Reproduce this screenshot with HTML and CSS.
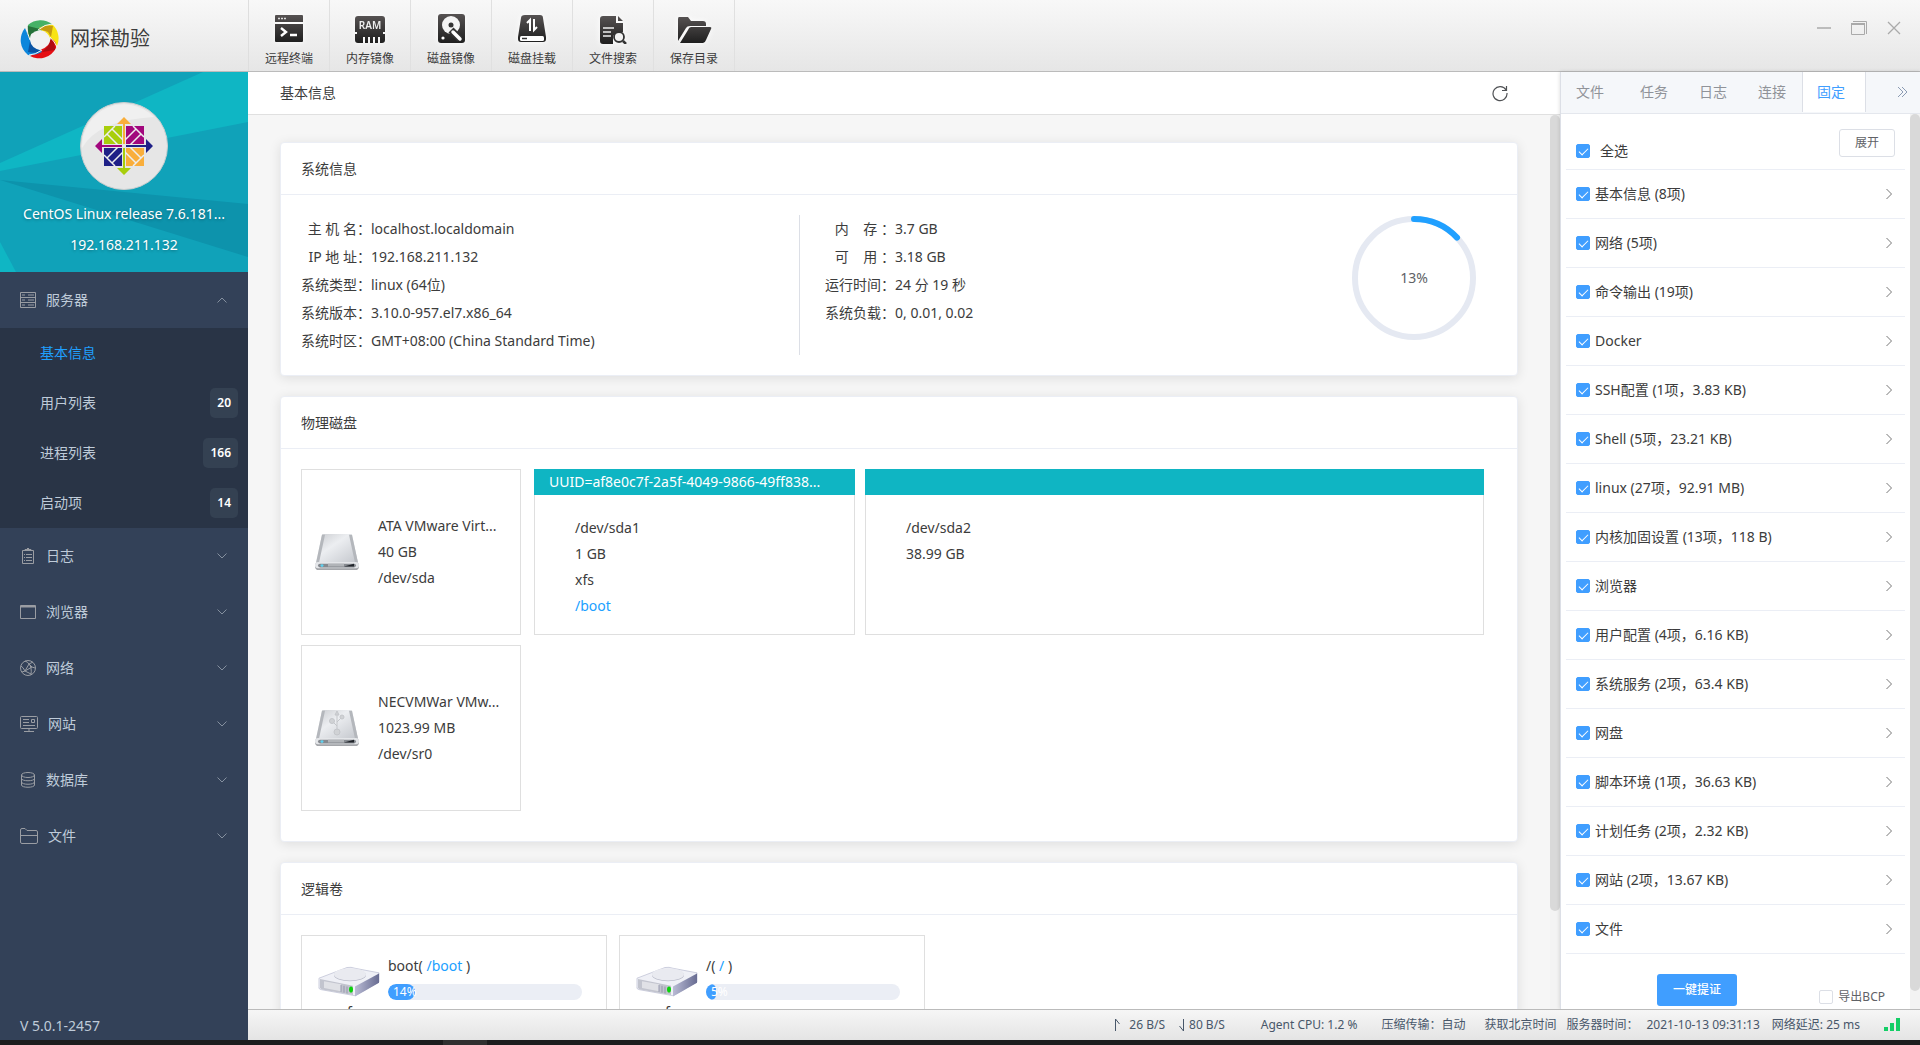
FILE: index.html
```html
<!DOCTYPE html>
<html lang="zh-CN">
<head>
<meta charset="utf-8">
<title>网探勘验</title>
<link rel="stylesheet" href="styles.css">
</head>
<body>
<svg class="defs" aria-hidden="true">
  <defs>
    <linearGradient id="ink" x1="0" y1="0" x2="0" y2="1"><stop offset="0" stop-color="#565252"/><stop offset="1" stop-color="#1f1f1f"/></linearGradient>
    <linearGradient id="metal" x1="0" y1="0" x2="1" y2="1"><stop offset="0" stop-color="#c9cbcf"/><stop offset=".4" stop-color="#eceef1"/><stop offset="1" stop-color="#c3c6cc"/></linearGradient>
    <linearGradient id="side" x1="0" y1="0" x2="1" y2="0"><stop offset="0" stop-color="#b9bbd4"/><stop offset="1" stop-color="#686c92"/></linearGradient>
    <symbol id="down" viewBox="0 0 12 12"><path d="M1.500 3.500 6 8l4.500-4.500" fill="none" stroke="currentColor"/></symbol>
    <symbol id="right" viewBox="0 0 12 12"><path d="M3.500 1 8.500 6l-5 5" fill="none" stroke="currentColor"/></symbol>
    <symbol id="disk" viewBox="0 0 46 42" preserveAspectRatio="none">
      <path d="M8 2Q8 1 10 1H36Q38 1 38 2L44 33H2Z" fill="url(#metal)"/>
      <path d="M8 2 2 33H5L11 2ZM38 2 44 33H41L35 2Z" fill="#b4b7bc"/>
      <rect x="1" y="32" width="44" height="9" rx="4" fill="#a4a6aa"/>
      <rect x="1" y="32" width="44" height="7" rx="3" fill="#e4e6e9"/>
      <rect x="4" y="34" width="38" height="4" rx="2" fill="#85898f"/>
      <path d="M30 37h10v-3Z" fill="#20242a"/><rect x="14" y="34" width="16" height="3" fill="#b1b4b8"/>
      <circle cx="8" cy="36" r="1.500" fill="#5fd0ee"/>
    </symbol>
    <symbol id="volume" viewBox="0 0 64 42" preserveAspectRatio="none">
      <path d="M2 16 30 2Q34 1 38 3L62 9V21L38 39 4 31Q1 30 2 27Z" fill="#eff0f6" stroke="#c6c8da"/>
      <path d="M38 27 62 10V22L38 40Z" fill="url(#side)"/>
      <path d="M3 17 36 26V38L5 31Q3 30 3 28Z" fill="#c2c4ce"/>
      <path d="M7 20 24 24V33L7 29Z" fill="#e0e1e6"/><path d="M24 25v9m3-8v9m3-8v9" stroke="#8e91a8"/>
      <ellipse cx="33" cy="12" rx="16" ry="8" fill="#b9bbc9"/><ellipse cx="33" cy="11" rx="16" ry="8" fill="#e9eaf0"/>
      <ellipse cx="34" cy="31" rx="2" ry="4" fill="#0bd20b"/>
    </symbol>
  </defs>
</svg>
<div class="app">
  <header class="topbar">
    <div class="brand">
      <svg width="40" height="40" viewBox="0 0 40 40">
        <path d="M8 6A19 19 0 0 1 32 5L25 10 11 20Q7 14 8 6Z" fill="#46b166"/><path d="M8 7Q6 13 9 20L12 15 20 10Z" fill="#26723a"/>
        <path d="M33 6A19 19 0 0 1 37 27L31 20 19 9Q27 5 33 6Z" fill="#f8e313"/><path d="M33 7Q25 5 19 10L28 13 31 18Z" fill="#c59a10"/>
        <path d="M36 29A19 19 0 0 1 10 37L18 33 32 20Q37 23 36 29Z" fill="#e60f14"/><path d="M35 31Q35 24 31 19L28 27 22 33Z" fill="#b00c12"/>
        <path d="M8 36A19 19 0 0 1 5 9L9 19 22 33Q15 37 8 36Z" fill="#0c86dc"/><path d="M8 33Q15 35 21 32L14 28 10 22Z" fill="#0a55a5"/>
        <path d="M20 11Q29 13 30 20T20 31Q11 29 10 21T20 11Z" fill="#f1f1f1"/>
        <path d="M7 8Q7 14 10 21M32 5Q25 5 18 11M37 28Q35 23 30 18M9 36Q15 36 22 31" fill="none" stroke="#f4f4f4"/>
      </svg>
      <h1>网探勘验</h1>
    </div>
    <nav class="tools">
      <button class="tool"><svg width="30" height="30" viewBox="0 0 30 30"><path fill="url(#ink)" d="M2 1h26a1 1 0 0 1 1 1v6H1V2a1 1 0 0 1 1-1ZM1 10h28v17a1 1 0 0 1-1 1H2a1 1 0 0 1-1-1Z"/><path d="M4 4.500h2m1 0h2m1 0h2" stroke="#ddd" stroke-width="1.500"/><path d="m7 14 5 4-5 4M16 21h7" fill="none" stroke="#fff" stroke-width="2.400"/></svg>远程终端</button>
      <button class="tool"><svg width="30" height="30" viewBox="0 0 30 30"><path fill="url(#ink)" d="M3 2h24a3 3 0 0 1 3 3v13h-2v2h2v6a3 3 0 0 1-3 3h-2v-6h-2v6h-3v-6h-2v6h-3v-6h-2v6h-3v-6H8v6H3a3 3 0 0 1-3-3v-6h2v-2H0V5a3 3 0 0 1 3-3Z"/><text x="15" y="15" text-anchor="middle" class="ram">RAM</text></svg>内存镜像</button>
      <button class="tool"><svg width="30" height="30" viewBox="0 0 30 30"><rect x="2" y="0" width="27" height="29" rx="3" fill="url(#ink)"/><circle cx="15" cy="11" r="9" fill="#f4f4f4"/><circle cx="15" cy="11" r="2.500" fill="#333"/><path d="m15 16 9 9" stroke="#333" stroke-width="7"/><path d="m17 18 7 7" stroke="#fff" stroke-width="3.500" stroke-linecap="round"/><circle cx="7" cy="24" r="1.600" fill="#fff"/></svg>磁盘镜像</button>
      <button class="tool"><svg width="30" height="30" viewBox="0 0 30 30"><path fill="url(#ink)" d="M8 1h15q3 0 3 3l3 19v2q0 3-3 3H4q-3 0-3-3v-2L4 4q0-3 4-3Z"/><rect x="3" y="22" width="24" height="5" rx="1.500" fill="#fff"/><path d="M5 24.500h5" stroke="#333" stroke-width="1.500"/><path d="m10 9 3-3v11m4-12v11l3-3" fill="none" stroke="#fff" stroke-width="2"/></svg>磁盘挂载</button>
      <button class="tool"><svg width="30" height="30" viewBox="0 0 30 30"><path fill="url(#ink)" d="M5 2h13v7h7v9h-6l-4 4v8H5q-3 0-3-3V5q0-3 3-3Zm15 0 5 5h-5Z"/><path d="M5 14h11M5 18h8M5 22h8" stroke="#eee" stroke-width="1.500"/><circle cx="21" cy="23" r="5" fill="#f3f3f3" stroke="#333" stroke-width="1.800"/><path d="m25 27 3 3" stroke="#333" stroke-width="2.500"/></svg>文件搜索</button>
      <button class="tool"><svg width="36" height="30" viewBox="0 0 36 30"><path fill="url(#ink)" d="M3 3h9l3 4h12q3 0 3 3v2H14q-3 0-4 2L2 27V5q0-2 1-2ZM15 13h19q2 0 1 2l-5 11q-1 3-3 3H4l8-13q1-3 3-3Z"/></svg>保存目录</button>
    </nav>
    <div class="window-controls">
      <button aria-label="最小化"><svg width="16" height="16" viewBox="0 0 16 16"><path d="M1 8h14" stroke="#aaa" stroke-width="1.500"/></svg></button>
      <button aria-label="还原"><svg width="18" height="16" viewBox="0 0 18 16"><path d="M1.500 4.500h13v10h-13ZM3 1.500h13.500V14" fill="none" stroke="#aaa"/><path d="M1 4h14" stroke="#aaa" stroke-width="2"/></svg></button>
      <button aria-label="关闭"><svg width="16" height="16" viewBox="0 0 16 16"><path d="m2 2 12 12M14 2 2 14" stroke="#aaa" stroke-width="1.300"/></svg></button>
    </div>
  </header>

  <div class="workspace">
    <aside class="sidebar">
      <section class="host">
        <svg class="host-bg" viewBox="0 0 248 200" preserveAspectRatio="none"><path fill="#10a2b9" d="M0 0h248v200H0z"/><path fill="#0fb6c4" d="M203 0h45v50L0 99V91Z"/><path fill="#0d93ac" d="m0 108 248 24v53Z"/><path fill="#0fb6c4" d="m0 170 16 30H0Z"/></svg>
        <svg class="distro" width="88" height="88" viewBox="-44 -44 88 88">
          <circle r="43.500" fill="#e6e6e6" stroke="#c9cdce"/><path d="M-42 2A42 42 0 0 1 30-29Q-26-26-42 2Z" fill="#f0f0f0"/>
          <path fill="#a8ce0c" d="M-20-20h18v18h-18z"/><path fill="#a2077d" d="M2-20h18v18H2z"/><path fill="#1f2087" d="M-20 2h18v18h-18z"/><path fill="#f9ae3b" d="M2 2h18v18H2z"/>
          <path fill="none" stroke="#eee" stroke-width="1.500" d="M-17-12-5 0M-12-17 0-5M12-17 0-5M17-12 5 0M-17 12-5 0M-12 17 0 5M12 17 0 5M17 12 5 0M-20-9-9-20M9-20 20-9M-20 9-9 20M9 20 20 9"/>
          <path fill="#f9ae3b" d="m0-29 7 7H1V-2h-2v-20h-6Z"/><path fill="#1f2087" d="m29 0-7 7V1H2v-2h20v-6Z"/><path fill="#a8ce0c" d="m0 29 7-7H1V2h-2v20h-6Z"/><path fill="#a2077d" d="m-29 0 7 7V1h20v-2h-20v-6Z"/>
        </svg>
        <p class="os">CentOS Linux release 7.6.181...</p>
        <p class="ip">192.168.211.132</p>
      </section>
      <nav class="menu">
        <button class="menu-item open"><svg class="ico" width="16" height="16" viewBox="0 0 16 16"><path d="M.5.500h15v15H.5ZM.5 5.500h15M.5 10.500h15M2 3h3m3 0h6M2 8h3m3 0h6M2 13h3m3 0h6"/></svg><span>服务器</span><svg class="chev" width="12" height="12"><use href="#down"/></svg></button>
        <div class="submenu">
          <a href="#" class="current"><span>基本信息</span></a>
          <a href="#"><span>用户列表</span><b>20</b></a>
          <a href="#"><span>进程列表</span><b>166</b></a>
          <a href="#"><span>启动项</span><b>14</b></a>
        </div>
        <button class="menu-item"><svg class="ico" width="16" height="16" viewBox="0 0 16 16"><path d="M2.500 2.500h11v13h-11ZM5 3V1.500h6V3M7 .5h2M4 6.500h1m1 0h6M4 9.500h1m1 0h6M4 12.500h1m1 0h6"/></svg><span>日志</span><svg class="chev" width="12" height="12"><use href="#down"/></svg></button>
        <button class="menu-item"><svg class="ico" width="16" height="16" viewBox="0 0 16 16"><path d="M.5 1.500h15v13H.5Z"/><path d="M1 2.500h14" stroke-width="2"/></svg><span>浏览器</span><svg class="chev" width="12" height="12"><use href="#down"/></svg></button>
        <button class="menu-item"><svg class="ico" width="16" height="16" viewBox="0 0 16 16"><circle cx="8" cy="8" r="7.500"/><path d="M5 1q3 1 4 3 3 3 2 11M1 6q2 1 4 5l7-4 3 1M9 4 5 11l-3 1m9 2-6-3m4-7 4-2m-1 5-3-3"/></svg><span>网络</span><svg class="chev" width="12" height="12"><use href="#down"/></svg></button>
        <button class="menu-item"><svg class="ico" width="18" height="16" viewBox="0 0 18 16"><rect x=".5" y=".5" width="17" height="12" rx="1"/><path d="M3 3.500h6M3 6.500h6M3 9.500h12M11.500 3.500h3v3h-3ZM9 13v2M4 15.500h10"/></svg><span>网站</span><svg class="chev" width="12" height="12"><use href="#down"/></svg></button>
        <button class="menu-item"><svg class="ico" width="16" height="16" viewBox="0 0 16 16"><ellipse cx="8" cy="3" rx="6.500" ry="2.500"/><path d="M1.500 3v10c0 3 13 3 13 0V3M1.500 6.500c0 3 13 3 13 0M1.500 10c0 3 13 3 13 0"/></svg><span>数据库</span><svg class="chev" width="12" height="12"><use href="#down"/></svg></button>
        <button class="menu-item"><svg class="ico" width="18" height="16" viewBox="0 0 18 16"><path d="M.5 14V2Q.5.500 2 .5h3l2 2h9q1.500 0 1.500 1.500v10q0 1.500-1.500 1.500H2Q.5 15.500.5 14ZM.5 7.500h17"/></svg><span>文件</span><svg class="chev" width="12" height="12"><use href="#down"/></svg></button>
      </nav>
      <p class="version">V 5.0.1-2457</p>
    </aside>

    <div class="stage">
      <div class="panes">
        <main class="content">
          <div class="page-head"><h2>基本信息</h2><button aria-label="刷新"><svg width="18" height="18" viewBox="0 0 18 18"><path d="M15 6A7 7 0 1 0 16 9M15.500 2v4.500H11" fill="none" stroke="#505255" stroke-width="1.200"/></svg></button></div>
          <div class="scroller">
            <div class="cards">
              <section class="card">
                <h3>系统信息</h3>
                <div class="card-body sys">
                  <dl class="info first">
                    <dt>主 机 名：</dt><dd>localhost.localdomain</dd>
                    <dt>IP 地 址：</dt><dd>192.168.211.132</dd>
                    <dt>系统类型：</dt><dd>linux (64位)</dd>
                    <dt>系统版本：</dt><dd>3.10.0-957.el7.x86_64</dd>
                    <dt>系统时区：</dt><dd>GMT+08:00 (China Standard Time)</dd>
                  </dl>
                  <dl class="info">
                    <dt>内 &nbsp; &nbsp;存 ：</dt><dd>3.7 GB</dd>
                    <dt>可 &nbsp; &nbsp;用 ：</dt><dd>3.18 GB</dd>
                    <dt>运行时间：</dt><dd>24 分 19 秒</dd>
                    <dt>系统负载：</dt><dd>0, 0.01, 0.02</dd>
                  </dl>
                  <div class="gauge">
                    <svg width="126" height="126" viewBox="0 0 126 126"><circle cx="63" cy="63" r="59" fill="none" stroke="#e5e9f2" stroke-width="6"/><circle cx="63" cy="63" r="59" fill="none" stroke="#20a0ff" stroke-width="6" stroke-linecap="round" pathLength="100" stroke-dasharray="13 100" transform="rotate(-90 63 63)"/></svg>
                    <span>13%</span>
                  </div>
                </div>
              </section>

              <section class="card">
                <h3>物理磁盘</h3>
                <div class="card-body disks">
                  <div class="disk-row">
                    <div class="disk"><svg width="46" height="38"><use href="#disk"/></svg><div><p>ATA VMware Virt...</p><p>40 GB</p><p>/dev/sda</p></div></div>
                    <div class="part boot-part"><h4>UUID=af8e0c7f-2a5f-4049-9866-49ff838...</h4><div><p>/dev/sda1</p><p>1 GB</p><p>xfs</p><p><a href="#">/boot</a></p></div></div>
                    <div class="part root-part"><h4></h4><div><p>/dev/sda2</p><p>38.99 GB</p></div></div>
                  </div>
                  <div class="disk-row">
                    <div class="disk"><svg width="46" height="38"><use href="#disk"/><g fill="none" stroke="#c4c6ca"><path d="M23 26V6M23 17l-4-4m4 0 4-4"/><circle cx="23" cy="23" r="3" fill="#d0d2d5"/><circle cx="18" cy="12" r="2.500" fill="#d0d2d5"/><circle cx="28" cy="8" r="2" fill="#d0d2d5"/><path d="m21 6 2-4 2 4Z" fill="#d0d2d5"/></g></svg><div><p>NECVMWar VMw...</p><p>1023.99 MB</p><p>/dev/sr0</p></div></div>
                  </div>
                </div>
              </section>

              <section class="card">
                <h3>逻辑卷</h3>
                <div class="card-body volumes">
                  <div class="volume"><div class="vol-icon"><svg width="64" height="32"><use href="#volume"/></svg><span>xfs</span></div><div class="vol-info"><p>boot( <a href="#">/boot</a> )</p><div class="bar"><i style="width:14%"></i><span>14%</span></div></div></div>
                  <div class="volume"><div class="vol-icon"><svg width="64" height="32"><use href="#volume"/></svg><span>xfs</span></div><div class="vol-info"><p>/( <a href="#">/</a> )</p><div class="bar"><i style="width:5%"></i><span>5%</span></div></div></div>
                </div>
              </section>
            </div>
            <div class="track"><div class="thumb main-thumb"></div></div>
          </div>
        </main>

        <aside class="evidence">
          <div class="tabs">
            <button class="wide">文件</button><button>任务</button><button>日志</button><button>连接</button><button class="active wide">固定</button>
            <button class="more" aria-label="更多"><svg width="12" height="12" viewBox="0 0 12 12"><path d="m1 1 5 5-5 5M5 1l5 5-5 5" fill="none" stroke="#8b9bb3"/></svg></button>
          </div>
          <div class="evidence-body">
            <div class="evidence-main">
              <div class="all-row"><label><input type="checkbox" checked>全选</label><button class="plain">展开</button></div>
              <ul class="items">
                <li><label><input type="checkbox" checked>基本信息 (8项)</label><svg width="12" height="12"><use href="#right"/></svg></li>
                <li><label><input type="checkbox" checked>网络 (5项)</label><svg width="12" height="12"><use href="#right"/></svg></li>
                <li><label><input type="checkbox" checked>命令输出 (19项)</label><svg width="12" height="12"><use href="#right"/></svg></li>
                <li><label><input type="checkbox" checked>Docker</label><svg width="12" height="12"><use href="#right"/></svg></li>
                <li><label><input type="checkbox" checked>SSH配置 (1项，3.83 KB)</label><svg width="12" height="12"><use href="#right"/></svg></li>
                <li><label><input type="checkbox" checked>Shell (5项，23.21 KB)</label><svg width="12" height="12"><use href="#right"/></svg></li>
                <li><label><input type="checkbox" checked>linux (27项，92.91 MB)</label><svg width="12" height="12"><use href="#right"/></svg></li>
                <li><label><input type="checkbox" checked>内核加固设置 (13项，118 B)</label><svg width="12" height="12"><use href="#right"/></svg></li>
                <li><label><input type="checkbox" checked>浏览器</label><svg width="12" height="12"><use href="#right"/></svg></li>
                <li><label><input type="checkbox" checked>用户配置 (4项，6.16 KB)</label><svg width="12" height="12"><use href="#right"/></svg></li>
                <li><label><input type="checkbox" checked>系统服务 (2项，63.4 KB)</label><svg width="12" height="12"><use href="#right"/></svg></li>
                <li><label><input type="checkbox" checked>网盘</label><svg width="12" height="12"><use href="#right"/></svg></li>
                <li><label><input type="checkbox" checked>脚本环境 (1项，36.63 KB)</label><svg width="12" height="12"><use href="#right"/></svg></li>
                <li><label><input type="checkbox" checked>计划任务 (2项，2.32 KB)</label><svg width="12" height="12"><use href="#right"/></svg></li>
                <li><label><input type="checkbox" checked>网站 (2项，13.67 KB)</label><svg width="12" height="12"><use href="#right"/></svg></li>
                <li><label><input type="checkbox" checked>文件</label><svg width="12" height="12"><use href="#right"/></svg></li>
              </ul>
              <div class="actions"><button class="primary">一键提证</button><label><input type="checkbox">导出BCP</label></div>
            </div>
            <div class="track"><div class="thumb side-thumb"></div></div>
          </div>
        </aside>
      </div>

      <footer class="status">
        <span class="rate"><svg width="8" height="14" viewBox="0 0 8 14"><path d="M2.500 13V1l4 5" fill="none" stroke="currentColor"/></svg>26 B/S</span>
        <span class="rate down"><svg width="8" height="14" viewBox="0 0 8 14"><path d="M5.500 1v12l-4-5" fill="none" stroke="currentColor"/></svg>80 B/S</span>
        <span class="cpu">Agent CPU: 1.2 %</span>
        <span class="zip">压缩传输：自动</span>
        <a href="#">获取北京时间</a>
        <span class="clock">服务器时间：<time>2021-10-13 09:31:13</time></span>
        <span class="delay">网络延迟: 25 ms</span>
        <svg width="16" height="14" viewBox="0 0 16 14"><path fill="#13ce66" d="M0 9h4v4H0ZM6 5h4v8H6ZM12 0h4v13h-4Z"/></svg>
      </footer>
    </div>
  </div>
  <div class="taskbar"><i></i></div>
</div>
</body>
</html>
```
FILE: styles.css
```css
* { box-sizing: border-box; }
body, h1, h2, h3, h4, p, dl, dd, ul { margin: 0; padding: 0; font-weight: 400; }
body { font: 14px/28px "Noto Sans", "Noto Sans CJK SC", sans-serif; color: #3c3c3c; background: #f6f6f6; }
button { font: inherit; color: inherit; border: 0; background: none; padding: 0; }
a { color: #20a0ff; text-decoration: none; }
svg { flex: none; display: block; }
.defs { position: absolute; width: 0; height: 0; }

.app { display: flex; flex-direction: column; height: 100vh; overflow: hidden; }
.topbar { flex: none; height: 72px; display: flex; background: linear-gradient(#f8f8f8, #e6e6e6); border-bottom: 1px solid #bbb; }
.brand { width: 248px; display: flex; align-items: center; gap: 10px; padding: 6px 0 0 20px; }
.brand h1 { font-size: 20px; }
.tools { display: flex; flex: 1; border-left: 1px solid #dedede; }
.tool { width: 81px; border-right: 1px solid #e0e0e0; display: flex; flex-direction: column; align-items: center; padding-top: 14px; font-size: 12px; line-height: 16px; gap: 7px; }
.tool svg { filter: drop-shadow(0 0 3px #fff); }
.ram { font: 600 10px "Noto Sans", sans-serif; fill: #eee; }
.window-controls { display: flex; align-items: flex-start; gap: 18px; padding: 20px 18px 0 0; }

.workspace { flex: 1; min-height: 0; display: flex; }
.sidebar { width: 248px; flex: none; background: #334158; color: #bfcbd9; display: flex; flex-direction: column; }
.host { position: relative; height: 200px; flex: none; padding: 30px 16px 0; color: #fff; text-align: center; display: flex; flex-direction: column; align-items: center; text-shadow: 0 1px 3px rgba(0, 0, 0, .3); }
.host-bg { position: absolute; inset: 0; width: 100%; height: 100%; }
.host > :not(.host-bg) { position: relative; }
.host p { line-height: 31px; white-space: nowrap; }
.os { margin-top: 8px; }
.menu { flex: 1; }
.menu-item { width: 100%; height: 56px; display: flex; align-items: center; gap: 10px; padding: 0 20px; }
.ico { fill: none; stroke: #9a9da3; }
.chev { margin-left: auto; color: #85909f; }
.open .chev { transform: rotate(180deg); }
.submenu { background: #293446; }
.submenu a { height: 50px; display: flex; align-items: center; justify-content: space-between; padding: 0 10px 0 40px; color: #bfcbd9; }
.submenu .current { color: #20a0ff; }
.submenu b { background: #344152; color: #fff; border-radius: 5px; font-size: 12px; font-weight: 600; line-height: 30px; padding: 0 7px; }
.version { padding: 0 20px; }

.stage { flex: 1; min-width: 0; display: flex; flex-direction: column; }
.panes { flex: 1; min-height: 0; display: flex; }
.content { flex: 1; min-width: 0; display: flex; flex-direction: column; }
.page-head { height: 43px; flex: none; background: #fff; border-bottom: 1px solid #e0e0e0; padding: 0 51px 0 32px; display: flex; align-items: center; justify-content: space-between; }
.page-head h2 { font-size: 14px; }
.scroller { flex: 1; min-height: 0; display: flex; overflow: hidden; }
.cards { flex: 1; padding: 27px 32px 20px; display: flex; flex-direction: column; gap: 20px; }
.track { width: 10px; flex: none; background: #f3f3f3; }
.thumb { background: #d9d9d9; border-radius: 5px; }
.main-thumb { height: 89%; }
.side-thumb { height: 98%; }

.card { flex: none; background: #fff; border: 1px solid #ebeef5; border-radius: 4px; box-shadow: 0 2px 12px rgba(0, 0, 0, .1); }
.card h3 { font-size: 14px; line-height: 51px; padding: 0 20px; border-bottom: 1px solid #ebeef5; }
.card-body { padding: 20px; }
.sys { display: flex; align-items: flex-start; }
.info { display: grid; grid-template-columns: 70px 1fr; flex: 1; padding-left: 25px; }
.info dt { text-align: right; white-space: nowrap; }
.info.first { flex: 0 0 499px; padding-left: 0; border-right: 1px solid #dcdfe6; }
.gauge { display: grid; place-items: center; margin-right: 20px; color: #606266; height: 140px; align-content: start; }
.gauge > * { grid-area: 1 / 1; }
.disks { display: flex; flex-direction: column; gap: 10px; padding-bottom: 30px; }
.disk-row { display: flex; gap: 10px; height: 166px; }
.disk { width: 220px; border: 1px solid #dfdfdf; display: flex; align-items: center; gap: 18px; padding: 0 0 0 12px; line-height: 26px; }
.disk p, .part h4 { white-space: nowrap; }
.part { border: 1px solid #dfdfdf; border-top: 0; line-height: 26px; }
.part h4 { font-size: 14px; height: 26px; line-height: 25px; margin: 0 -1px; padding: 0 15px; background: #0fb5c3; color: #fff; }
.part div { padding: 20px 40px; }
.boot-part { width: 321px; margin-left: 3px; }
.root-part { width: 619px; }
.volumes { display: flex; gap: 12px; }
.volume { width: 306px; height: 120px; border: 1px solid #dfdfdf; display: flex; gap: 7px; padding: 16px 24px 0 15px; }
.vol-icon { display: flex; flex-direction: column; align-items: center; padding-top: 14px; width: 64px; }
.vol-info { flex: 1; }
.bar { display: flex; align-items: center; position: relative; height: 16px; margin-top: 4px; background: #ebeef5; border-radius: 8px; overflow: hidden; }
.bar i { height: 16px; background: #409eff; border-radius: 8px; }
.bar span { position: absolute; left: 5px; color: #fff; font-size: 12px; line-height: 16px; }

.evidence { width: 360px; flex: none; background: #fff; border-left: 1px solid #dcdfe6; box-shadow: 0 0 4px rgba(0, 0, 0, .15); display: flex; flex-direction: column; }
.tabs { height: 42px; flex: none; display: flex; background: #f5f7fa; border-bottom: 1px solid #e4e7ed; color: #909399; }
.tabs button { padding: 0 15px; height: 40px; border-right: 1px solid transparent; }
.tabs .wide { padding-right: 20px; }
.tabs .active { background: #fff; color: #409eff; border-left: 1px solid #dcdfe6; border-right-color: #dcdfe6; padding-left: 14px; }
.tabs .more { margin-left: auto; padding: 0 10px; }
.evidence-body { flex: 1; min-height: 0; display: flex; overflow: hidden; }
.evidence-main { flex: 1; padding: 0 5px; }
label { display: flex; align-items: center; gap: 5px; }
input[type=checkbox] { appearance: none; width: 14px; height: 14px; margin: 0; flex: none; border: 1px solid #dcdfe6; border-radius: 2px; background: #fff; display: grid; place-items: center; }
input:checked { background: #409eff; border-color: #409eff; }
input:checked::after { content: ""; width: 8px; height: 4px; border: solid #fff; border-width: 0 0 1px 1px; transform: translateY(-1px) rotate(-45deg); }
.all-row { height: 56px; padding: 15px 10px 0; display: flex; align-items: flex-start; justify-content: space-between; border-bottom: 1px solid #ebeef5; }
.all-row label { gap: 10px; padding-top: 8px; }
.plain { width: 56px; height: 28px; line-height: 26px; border: 1px solid #dcdfe6; border-radius: 3px; font-size: 12px; color: #606266; }
.items { list-style: none; }
.items li { height: 49px; display: flex; align-items: center; justify-content: space-between; padding: 0 10px; border-bottom: 1px solid #ebeef5; }
.items li svg { color: #777; }
.actions { display: flex; align-items: flex-start; justify-content: space-between; padding: 20px 20px 0 91px; font-size: 12px; color: #606266; }
.primary { width: 80px; height: 32px; border-radius: 3px; background: #409eff; color: #fff; line-height: 32px; font-weight: 500; }
.actions label { padding-top: 9px; }

.status { height: 31px; flex: none; background: linear-gradient(#f6f6f6, #e4e4e4); border-top: 1px solid #bbb; display: flex; align-items: center; justify-content: flex-end; padding-right: 20px; font-size: 12px; color: #48576a; white-space: nowrap; }
.status a { color: inherit; }
.rate { display: flex; align-items: center; gap: 8px; }
.rate.down { margin-left: 13px; gap: 3px; }
.cpu { margin-left: 36px; }
.zip { margin: 0 19px 0 24px; }
.clock { margin: 0 12px 0 10px; }
.clock time { margin-left: 8px; }
.delay { margin-right: 24px; }
.taskbar { height: 5px; flex: none; background: #1c1c1d; padding-left: 443px; }
.taskbar i { display: block; width: 44px; height: 5px; background: #303030; }
```
